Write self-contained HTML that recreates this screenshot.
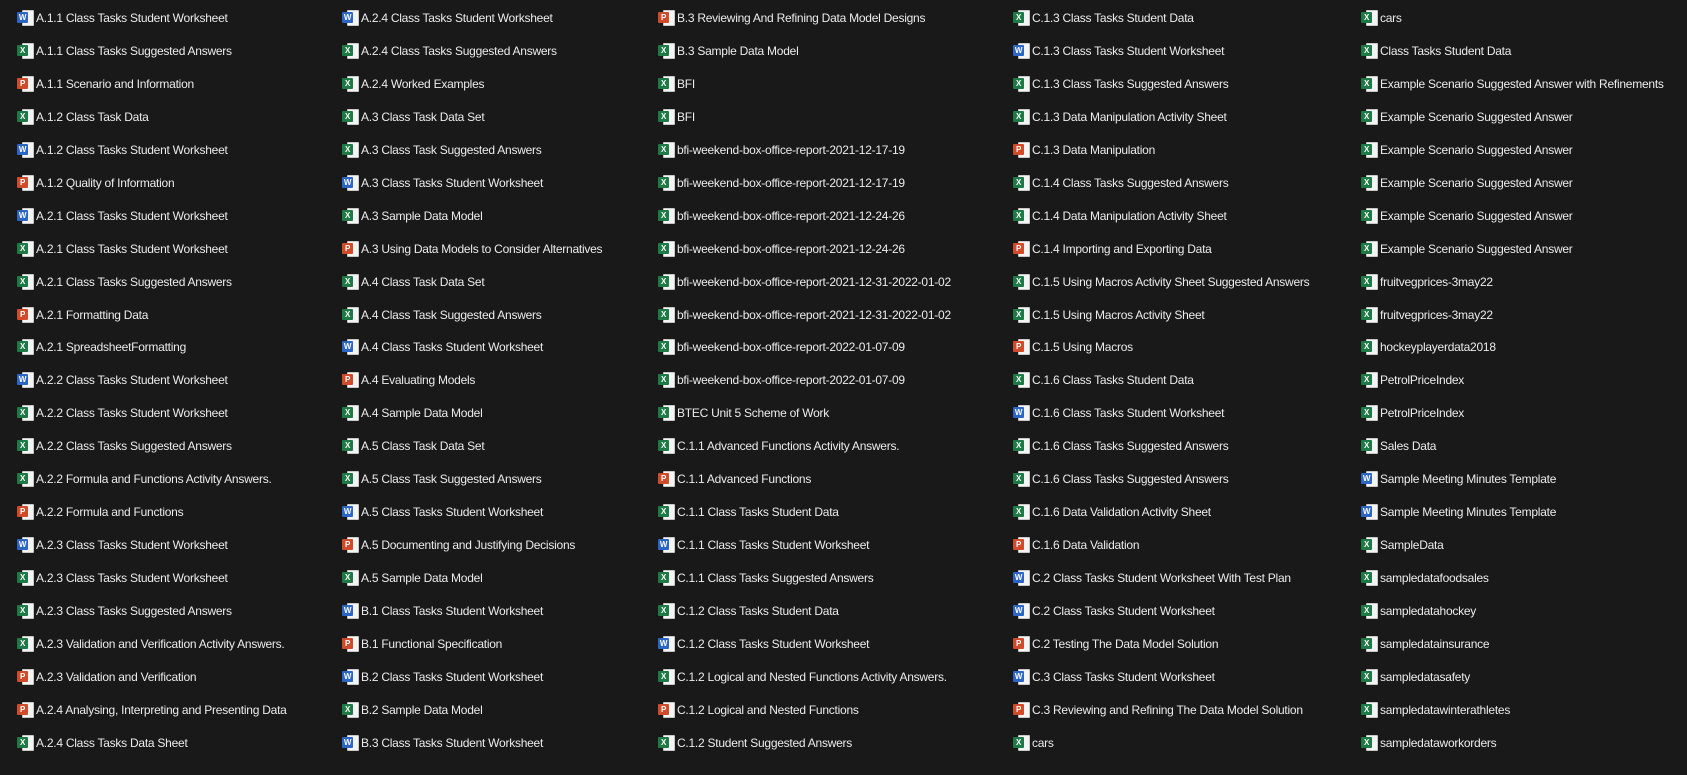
<!DOCTYPE html>
<html><head><meta charset="utf-8"><style>
html,body{margin:0;padding:0;background:#191919;width:1687px;height:775px;overflow:hidden}
.c{position:absolute;top:1.8px;font-family:"Liberation Sans",sans-serif;font-size:12px;color:#ececec;white-space:nowrap;letter-spacing:-0.25px}
.c div{height:32.98px;line-height:32.98px}
i{position:relative;display:inline-block;width:17px;height:17px;vertical-align:-4px;margin-right:2px}
i::before{content:"";position:absolute;left:5px;top:1px;width:10px;height:14px;background:#f4f4f4;border:1px solid #c8c8c8;border-radius:1px}
i::after{position:absolute;left:0;top:3px;width:11px;height:11px;font:bold 8px/11px "Liberation Sans",sans-serif;color:#fff;text-align:center;border-radius:1px}
i.w::after{content:"W";background:#2b66c6}
i.x::after{content:"X";background:#1d7a45}
i.p::after{content:"P";background:#d04b2a}
</style></head><body>
<div class="c" style="left:17px">
<div><i class="w"></i>A.1.1 Class Tasks Student Worksheet</div>
<div><i class="x"></i>A.1.1 Class Tasks Suggested Answers</div>
<div><i class="p"></i>A.1.1 Scenario and Information</div>
<div><i class="x"></i>A.1.2 Class Task Data</div>
<div><i class="w"></i>A.1.2 Class Tasks Student Worksheet</div>
<div><i class="p"></i>A.1.2 Quality of Information</div>
<div><i class="w"></i>A.2.1 Class Tasks Student Worksheet</div>
<div><i class="x"></i>A.2.1 Class Tasks Student Worksheet</div>
<div><i class="x"></i>A.2.1 Class Tasks Suggested Answers</div>
<div><i class="p"></i>A.2.1 Formatting Data</div>
<div><i class="x"></i>A.2.1 SpreadsheetFormatting</div>
<div><i class="w"></i>A.2.2 Class Tasks Student Worksheet</div>
<div><i class="x"></i>A.2.2 Class Tasks Student Worksheet</div>
<div><i class="x"></i>A.2.2 Class Tasks Suggested Answers</div>
<div><i class="x"></i>A.2.2 Formula and Functions Activity Answers.</div>
<div><i class="p"></i>A.2.2 Formula and Functions</div>
<div><i class="w"></i>A.2.3 Class Tasks Student Worksheet</div>
<div><i class="x"></i>A.2.3 Class Tasks Student Worksheet</div>
<div><i class="x"></i>A.2.3 Class Tasks Suggested Answers</div>
<div><i class="x"></i>A.2.3 Validation and Verification Activity Answers.</div>
<div><i class="p"></i>A.2.3 Validation and Verification</div>
<div><i class="p"></i>A.2.4 Analysing, Interpreting and Presenting Data</div>
<div><i class="x"></i>A.2.4 Class Tasks Data Sheet</div>
</div>
<div class="c" style="left:342px">
<div><i class="w"></i>A.2.4 Class Tasks Student Worksheet</div>
<div><i class="x"></i>A.2.4 Class Tasks Suggested Answers</div>
<div><i class="x"></i>A.2.4 Worked Examples</div>
<div><i class="x"></i>A.3 Class Task Data Set</div>
<div><i class="x"></i>A.3 Class Task Suggested Answers</div>
<div><i class="w"></i>A.3 Class Tasks Student Worksheet</div>
<div><i class="x"></i>A.3 Sample Data Model</div>
<div><i class="p"></i>A.3 Using Data Models to Consider Alternatives</div>
<div><i class="x"></i>A.4 Class Task Data Set</div>
<div><i class="x"></i>A.4 Class Task Suggested Answers</div>
<div><i class="w"></i>A.4 Class Tasks Student Worksheet</div>
<div><i class="p"></i>A.4 Evaluating Models</div>
<div><i class="x"></i>A.4 Sample Data Model</div>
<div><i class="x"></i>A.5 Class Task Data Set</div>
<div><i class="x"></i>A.5 Class Task Suggested Answers</div>
<div><i class="w"></i>A.5 Class Tasks Student Worksheet</div>
<div><i class="p"></i>A.5 Documenting and Justifying Decisions</div>
<div><i class="x"></i>A.5 Sample Data Model</div>
<div><i class="w"></i>B.1 Class Tasks Student Worksheet</div>
<div><i class="p"></i>B.1 Functional Specification</div>
<div><i class="w"></i>B.2 Class Tasks Student Worksheet</div>
<div><i class="x"></i>B.2 Sample Data Model</div>
<div><i class="w"></i>B.3 Class Tasks Student Worksheet</div>
</div>
<div class="c" style="left:658px">
<div><i class="p"></i>B.3 Reviewing And Refining Data Model Designs</div>
<div><i class="x"></i>B.3 Sample Data Model</div>
<div><i class="x"></i>BFI</div>
<div><i class="x"></i>BFI</div>
<div><i class="x"></i>bfi-weekend-box-office-report-2021-12-17-19</div>
<div><i class="x"></i>bfi-weekend-box-office-report-2021-12-17-19</div>
<div><i class="x"></i>bfi-weekend-box-office-report-2021-12-24-26</div>
<div><i class="x"></i>bfi-weekend-box-office-report-2021-12-24-26</div>
<div><i class="x"></i>bfi-weekend-box-office-report-2021-12-31-2022-01-02</div>
<div><i class="x"></i>bfi-weekend-box-office-report-2021-12-31-2022-01-02</div>
<div><i class="x"></i>bfi-weekend-box-office-report-2022-01-07-09</div>
<div><i class="x"></i>bfi-weekend-box-office-report-2022-01-07-09</div>
<div><i class="x"></i>BTEC Unit 5 Scheme of Work</div>
<div><i class="x"></i>C.1.1 Advanced Functions Activity Answers.</div>
<div><i class="p"></i>C.1.1 Advanced Functions</div>
<div><i class="x"></i>C.1.1 Class Tasks Student Data</div>
<div><i class="w"></i>C.1.1 Class Tasks Student Worksheet</div>
<div><i class="x"></i>C.1.1 Class Tasks Suggested Answers</div>
<div><i class="x"></i>C.1.2 Class Tasks Student Data</div>
<div><i class="w"></i>C.1.2 Class Tasks Student Worksheet</div>
<div><i class="x"></i>C.1.2 Logical and Nested Functions Activity Answers.</div>
<div><i class="p"></i>C.1.2 Logical and Nested Functions</div>
<div><i class="x"></i>C.1.2 Student Suggested Answers</div>
</div>
<div class="c" style="left:1013px">
<div><i class="x"></i>C.1.3 Class Tasks Student Data</div>
<div><i class="w"></i>C.1.3 Class Tasks Student Worksheet</div>
<div><i class="x"></i>C.1.3 Class Tasks Suggested Answers</div>
<div><i class="x"></i>C.1.3 Data Manipulation Activity Sheet</div>
<div><i class="p"></i>C.1.3 Data Manipulation</div>
<div><i class="x"></i>C.1.4 Class Tasks Suggested Answers</div>
<div><i class="x"></i>C.1.4 Data Manipulation Activity Sheet</div>
<div><i class="p"></i>C.1.4 Importing and Exporting Data</div>
<div><i class="x"></i>C.1.5 Using Macros Activity Sheet Suggested Answers</div>
<div><i class="x"></i>C.1.5 Using Macros Activity Sheet</div>
<div><i class="p"></i>C.1.5 Using Macros</div>
<div><i class="x"></i>C.1.6 Class Tasks Student Data</div>
<div><i class="w"></i>C.1.6 Class Tasks Student Worksheet</div>
<div><i class="x"></i>C.1.6 Class Tasks Suggested Answers</div>
<div><i class="x"></i>C.1.6 Class Tasks Suggested Answers</div>
<div><i class="x"></i>C.1.6 Data Validation Activity Sheet</div>
<div><i class="p"></i>C.1.6 Data Validation</div>
<div><i class="w"></i>C.2 Class Tasks Student Worksheet With Test Plan</div>
<div><i class="w"></i>C.2 Class Tasks Student Worksheet</div>
<div><i class="p"></i>C.2 Testing The Data Model Solution</div>
<div><i class="w"></i>C.3 Class Tasks Student Worksheet</div>
<div><i class="p"></i>C.3 Reviewing and Refining The Data Model Solution</div>
<div><i class="x"></i>cars</div>
</div>
<div class="c" style="left:1361px">
<div><i class="x"></i>cars</div>
<div><i class="x"></i>Class Tasks Student Data</div>
<div><i class="x"></i>Example Scenario Suggested Answer with Refinements</div>
<div><i class="x"></i>Example Scenario Suggested Answer</div>
<div><i class="x"></i>Example Scenario Suggested Answer</div>
<div><i class="x"></i>Example Scenario Suggested Answer</div>
<div><i class="x"></i>Example Scenario Suggested Answer</div>
<div><i class="x"></i>Example Scenario Suggested Answer</div>
<div><i class="x"></i>fruitvegprices-3may22</div>
<div><i class="x"></i>fruitvegprices-3may22</div>
<div><i class="x"></i>hockeyplayerdata2018</div>
<div><i class="x"></i>PetrolPriceIndex</div>
<div><i class="x"></i>PetrolPriceIndex</div>
<div><i class="x"></i>Sales Data</div>
<div><i class="w"></i>Sample Meeting Minutes Template</div>
<div><i class="w"></i>Sample Meeting Minutes Template</div>
<div><i class="x"></i>SampleData</div>
<div><i class="x"></i>sampledatafoodsales</div>
<div><i class="x"></i>sampledatahockey</div>
<div><i class="x"></i>sampledatainsurance</div>
<div><i class="x"></i>sampledatasafety</div>
<div><i class="x"></i>sampledatawinterathletes</div>
<div><i class="x"></i>sampledataworkorders</div>
</div>
</body></html>
